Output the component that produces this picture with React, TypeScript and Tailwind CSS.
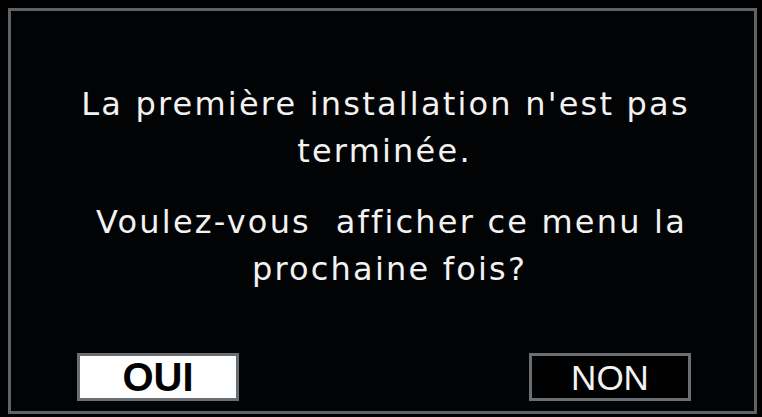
export default function App() {
  return (
    <div className="w-[762px] h-[417px] bg-black pt-[8px] pl-[8px] pr-[5px] pb-[3px] box-border">
      <div className="w-full h-full border-[3px] border-[#5e6367] bg-[#020304] flex flex-col box-border">
        <div
          className="pt-[70px] text-center text-[#f2f2f2] text-[32px] leading-[47px] tracking-[2.2px]"
          style={{ fontFamily: '"DejaVu Sans", sans-serif' }}
        >
          <div className="pl-[6px]">La première installation n'est pas</div>
          <div className="pl-[4px]">terminée.</div>
          <div className="mt-[24px] whitespace-pre pl-[18px]">Voulez-vous  afficher ce menu la</div>
          <div className="pl-[14px]">prochaine fois?</div>
        </div>
        <div
          className="mt-auto flex justify-between pl-[66px] pr-[63px] pb-[10px]"
          style={{ fontFamily: '"Liberation Sans", Arial, sans-serif' }}
        >
          <div className="w-[162px] h-[48px] border-[3px] border-[#6a6f73] bg-white flex items-center justify-center text-black font-bold text-[40px] leading-none box-border">
            OUI
          </div>
          <div className="w-[162px] h-[48px] border-[3px] border-[#6a6f73] bg-black flex items-center justify-center text-[#f2f2f2] text-[35px] leading-none box-border">
            NON
          </div>
        </div>
      </div>
    </div>
  );
}
